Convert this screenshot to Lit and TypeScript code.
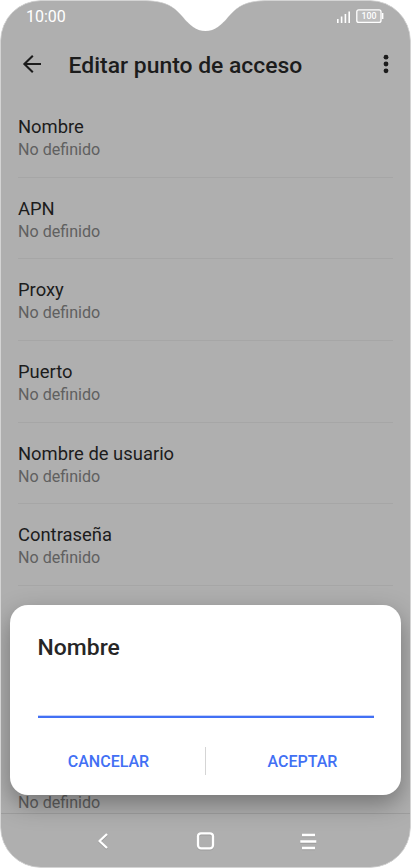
import { LitElement, html, css, svg } from "lit";
import { customElement } from "lit/decorators.js";

const FIELDS = ["Nombre", "APN", "Proxy", "Puerto", "Nombre de usuario", "Contraseña"];
const UNSET = "No definido";

const OUTLINE =
  "M41 .5 H142 C164 .5 173 5 183 17 C190 25 196 30.5 205.5 30.5 C215 30.5 221 25 228 17 C238 5 247 .5 269 .5 H370 A40.5 40.5 0 0 1 410.5 41 V827 A40.5 40.5 0 0 1 370 867.5 H41 A40.5 40.5 0 0 1 .5 827 V41 A40.5 40.5 0 0 1 41 .5 Z";

@customElement("app-root")
export class AppRoot extends LitElement {
  static styles = css`
    :host {
      display: block;
      width: 411px;
      height: 868px;
      overflow: hidden;
      background: #fff;
      font-family: Roboto, sans-serif;
      color: #1c1c1c;
    }
    .phone {
      position: relative;
      width: 411px;
      height: 868px;
      display: flex;
      flex-direction: column;
      isolation: isolate;
      clip-path: path("M41 0 H142 C164 0 173 5 183 17 C190 25 196 31 205.5 31 C215 31 221 25 228 17 C238 5 247 0 269 0 H370 A41 41 0 0 1 411 41 V827 A41 41 0 0 1 370 868 H41 A41 41 0 0 1 0 827 V41 A41 41 0 0 1 41 0 Z");
    }
    .shell {
      position: absolute;
      inset: 0;
      z-index: -1;
    }
    .rim {
      position: absolute;
      inset: 0;
      z-index: 3;
      pointer-events: none;
    }
    .status {
      height: 34px;
      box-sizing: border-box;
      padding: 0 27px 0 26px;
      display: flex;
      justify-content: space-between;
      color: #fff;
    }
    .clock {
      font-size: 16px;
      line-height: 34px;
    }
    .indicators {
      display: block;
      margin-top: 8px;
    }
    .bar {
      height: 62px;
      display: flex;
      align-items: center;
      padding: 0 20px 0 21px;
    }
    .title {
      flex: 1;
      margin: 2px 0 0 25.6px;
      font-size: 22.9px;
      line-height: 30px;
      font-weight: 500;
    }
    .bar svg, .nav svg { display: block; }
    .list {
      flex: 1;
      min-height: 0;
      overflow: hidden;
      padding: 0 18px;
    }
    .row {
      height: 81.7px;
      box-sizing: border-box;
      border-bottom: 1px solid #a6a6a6;
      padding-top: 19px;
    }
    .name {
      font-size: 18.4px;
      line-height: 23px;
      margin-bottom: 1px;
    }
    .value {
      font-size: 16.1px;
      line-height: 22px;
      color: #606060;
    }
    .last { margin-top: 206px; }
    .nav {
      height: 55px;
      box-sizing: border-box;
      border-top: 1px solid #9e9e9e;
    }
    .dialog {
      position: absolute;
      z-index: 2;
      left: 10px;
      top: 605px;
      width: 391px;
      height: 190px;
      box-sizing: border-box;
      border-radius: 18px;
      background: #fff;
      box-shadow: 0 9px 24px rgba(0, 0, 0, 0.34);
      padding: 28px 27px 0 28px;
      display: flex;
      flex-direction: column;
    }
    .heading {
      margin: 0 0 0 -0.4px;
      font-size: 22.9px;
      line-height: 30px;
      font-weight: 500;
      color: #262626;
    }
    .field {
      height: 55px;
      box-sizing: border-box;
      border-bottom: 2px solid #4270f4;
      box-shadow: inset 0 -1px #c4d1fa;
    }
    .actions {
      display: flex;
      align-items: center;
      margin: 29px -27px 0 -28px;
      height: 28px;
    }
    .action {
      flex: 1;
      padding: 2px 0 0 2px;
      border: 0;
      background: none;
      text-align: center;
      font: 500 16px/28px Roboto, sans-serif;
      color: #4270f4;
    }
    .split + .action { padding: 2px 2px 0 0; }
    .split {
      width: 1px;
      height: 28px;
      background: #d5d5d5;
    }
  `;

  private icons() {
    return html`<svg class="indicators" width="48" height="16" viewBox="336 8 48 16">
      ${[19, 16.5, 14, 11.5].map((y, i) => svg`<path d=${`M${337.8 + i * 3.8} ${y}V23`} stroke="#fff" stroke-width="1.6"/>`)}
      <rect x="356.8" y="9.8" width="24.2" height="12.6" rx="2" fill="#bdbdbd" stroke="#fff" stroke-width="1.3"/>
      <path d="M382.6 13v6" stroke="#fff" stroke-width="1.6"/>
      <text x="369" y="19.2" text-anchor="middle" font-size="8.8" font-weight="500" fill="#fff">100</text>
    </svg>`;
  }

  render() {
    return html`<div class="phone">
      <svg class="shell" width="411" height="868"><path d=${OUTLINE} fill="#afafaf" /></svg>
      <div class="status"><span class="clock">10:00</span>${this.icons()}</div>
      <header class="bar">
        <svg width="22" height="22" viewBox="21 54 22 22" fill="none" stroke="#1c1c1c" stroke-width="2.1">
          <path d="M32.8 55.8L24.4 64L32.8 72.2M24.4 64H41" />
        </svg>
        <h1 class="title">Editar punto de acceso</h1>
        <svg width="10" height="22" viewBox="381 54 10 22" fill="#1c1c1c">
          <circle cx="386" cy="57.2" r="2.4" /><circle cx="386" cy="64" r="2.4" /><circle cx="386" cy="70.8" r="2.4" />
        </svg>
      </header>
      <main class="list">
        ${FIELDS.map((f) => html`<div class="row"><div class="name">${f}</div><div class="value">${UNSET}</div></div>`)}
        <div class="value last">${UNSET}</div>
      </main>
      <nav class="nav">
        <svg width="411" height="54" viewBox="0 814 411 54" fill="none" stroke="#fff" stroke-width="2.3" stroke-linejoin="round">
          <g stroke="#8d8d8d" opacity=".6" transform="translate(0 1)">
            <path d="M107 834L99.5 841L107 848" /><rect x="198" y="833.3" width="15" height="15" rx="3" />
            <path d="M302 835H315M300.3 841.5H316.3M302 848H315" />
          </g>
          <path d="M107 834L99.5 841L107 848" /><rect x="198" y="833.3" width="15" height="15" rx="3" />
          <path d="M302 835H315M300.3 841.5H316.3M302 848H315" />
        </svg>
      </nav>
      <section class="dialog">
        <h2 class="heading">Nombre</h2>
        <div class="field"></div>
        <div class="actions">
          <button class="action">CANCELAR</button><span class="split"></span><button class="action">ACEPTAR</button>
        </div>
      </section>
      <svg class="rim" width="411" height="868"><path d=${OUTLINE} fill="none" stroke="#d4d4d4" /></svg>
    </div>`;
  }
}
